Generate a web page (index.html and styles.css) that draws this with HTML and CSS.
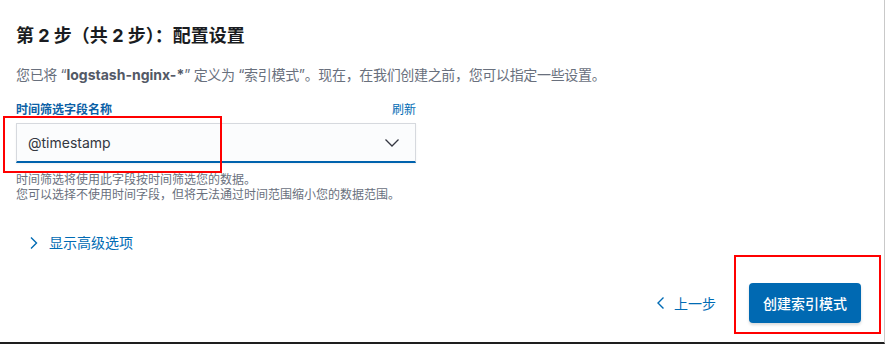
FILE: index.html
```html
<!DOCTYPE html>
<html lang="zh">
<head>
<meta charset="utf-8">
<link rel="stylesheet" href="styles.css">
</head>
<body>
<div class="frame">
  <div class="panel">
    <h2 class="title">第 2 步（共 2 步）：配置设置</h2>
    <p class="desc">您已将 “<b>logstash-nginx-*</b>” 定义为 “索引模式”。现在，在我们创建之前，您可以指定一些设置。</p>
    <div class="field">
      <div class="label-row">
        <span class="label">时间筛选字段名称</span>
        <span class="refresh">刷新</span>
      </div>
      <div class="select">
        <span class="value">@timestamp</span>
        <svg class="chev" width="16" height="10" viewBox="0 0 16 10"><path d="M1.5 1.5 L8 8 L14.5 1.5" fill="none" stroke="#343741" stroke-width="1.3"/></svg>
        <div class="mark mark-select"></div>
      </div>
      <div class="help">时间筛选将使用此字段按时间筛选您的数据。<br>您可以选择不使用时间字段，但将无法通过时间范围缩小您的数据范围。</div>
    </div>
    <div class="advanced">
      <svg class="chev-r" width="10" height="14" viewBox="0 0 10 14"><path d="M2 1.5 L7.5 7 L2 12.5" fill="none" stroke="#006bb4" stroke-width="1.4"/></svg>
      <span>显示高级选项</span>
    </div>
    <div class="actions">
      <div class="back">
        <svg width="10" height="14" viewBox="0 0 10 14"><path d="M7.5 1.5 L2 7 L7.5 12.5" fill="none" stroke="#006bb4" stroke-width="1.4"/></svg>
        <span>上一步</span>
      </div>
      <div class="btn-wrap">
        <button class="create">创建索引模式</button>
        <div class="mark mark-btn"></div>
      </div>
    </div>
  </div>
</div>
</body>
</html>
```
FILE: styles.css
```css
* { box-sizing: border-box; }
html, body {
  margin: 0;
  padding: 0;
  background: #fff;
  font-family: Inter, "Noto Sans CJK SC", sans-serif;
}
.frame {
  width: 885px;
  height: 344px;
  border-right: 1px solid #c9c9c9;
  border-bottom: 2px solid #1e1e1e;
}
.panel {
  padding: 24px 0 0 16px;
  display: flex;
  flex-direction: column;
}
.title {
  margin: 0;
  font-size: 18px;
  line-height: 24px;
  font-weight: 700;
  color: #1a1c21;
}
.desc {
  margin: 17px 0 0;
  font-size: 14px;
  line-height: 20px;
  color: #69707d;
  letter-spacing: -0.33px;
}
.desc b { color: #535966; font-weight: 700; letter-spacing: 0; }
.field {
  margin-top: 16px;
  width: 400px;
}
.label-row {
  display: flex;
  justify-content: space-between;
  align-items: center;
  height: 17px;
  font-size: 12px;
  line-height: 17px;
}
.label { font-weight: 700; color: #0b5fa6; }
.refresh { color: #006bb4; }
.select {
  position: relative;
  margin-top: 5px;
  height: 40px;
  border: 1px solid #d6d9de;
  border-bottom: 2px solid #0062ad;
  background: #fbfcfd;
  box-shadow: 0 1px 2px rgba(0,0,0,0.06);
  display: flex;
  align-items: center;
  justify-content: space-between;
  padding: 0 15px 0 11px;
}
.value { font-size: 14px; color: #343741; }
.chev { display: block; }
.help {
  margin-top: 9px;
  font-size: 12px;
  line-height: 15px;
  color: #69707d;
}
.advanced {
  margin-top: 32px;
  margin-left: 13px;
  display: flex;
  align-items: center;
  gap: 10px;
  font-size: 14px;
  line-height: 18px;
  color: #006bb4;
}
.chev-r { display: block; }
.actions {
  margin-top: 31px;
  display: flex;
  justify-content: flex-end;
  align-items: center;
  padding-right: 23px;
}
.back {
  display: flex;
  align-items: center;
  gap: 8px;
  font-size: 14px;
  color: #006bb4;
  margin-right: 33px;
}
.back svg { display: block; }
.btn-wrap { position: relative; }
.create {
  display: block;
  width: 112px;
  height: 40px;
  border: none;
  border-radius: 4px;
  background: #0069b2;
  color: #fff;
  font-family: Inter, "Noto Sans CJK SC", sans-serif;
  font-size: 14px;
  font-weight: 500;
  box-shadow: 0 2px 3px rgba(0,0,0,0.15);
  padding: 0;
}
.mark {
  position: absolute;
  border: 2px solid #f00;
  pointer-events: none;
}
.mark-select {
  left: -14px;
  top: -8px;
  width: 219px;
  height: 57px;
}
.mark-btn {
  left: -15px;
  top: -28px;
  width: 147px;
  height: 79px;
}
```
